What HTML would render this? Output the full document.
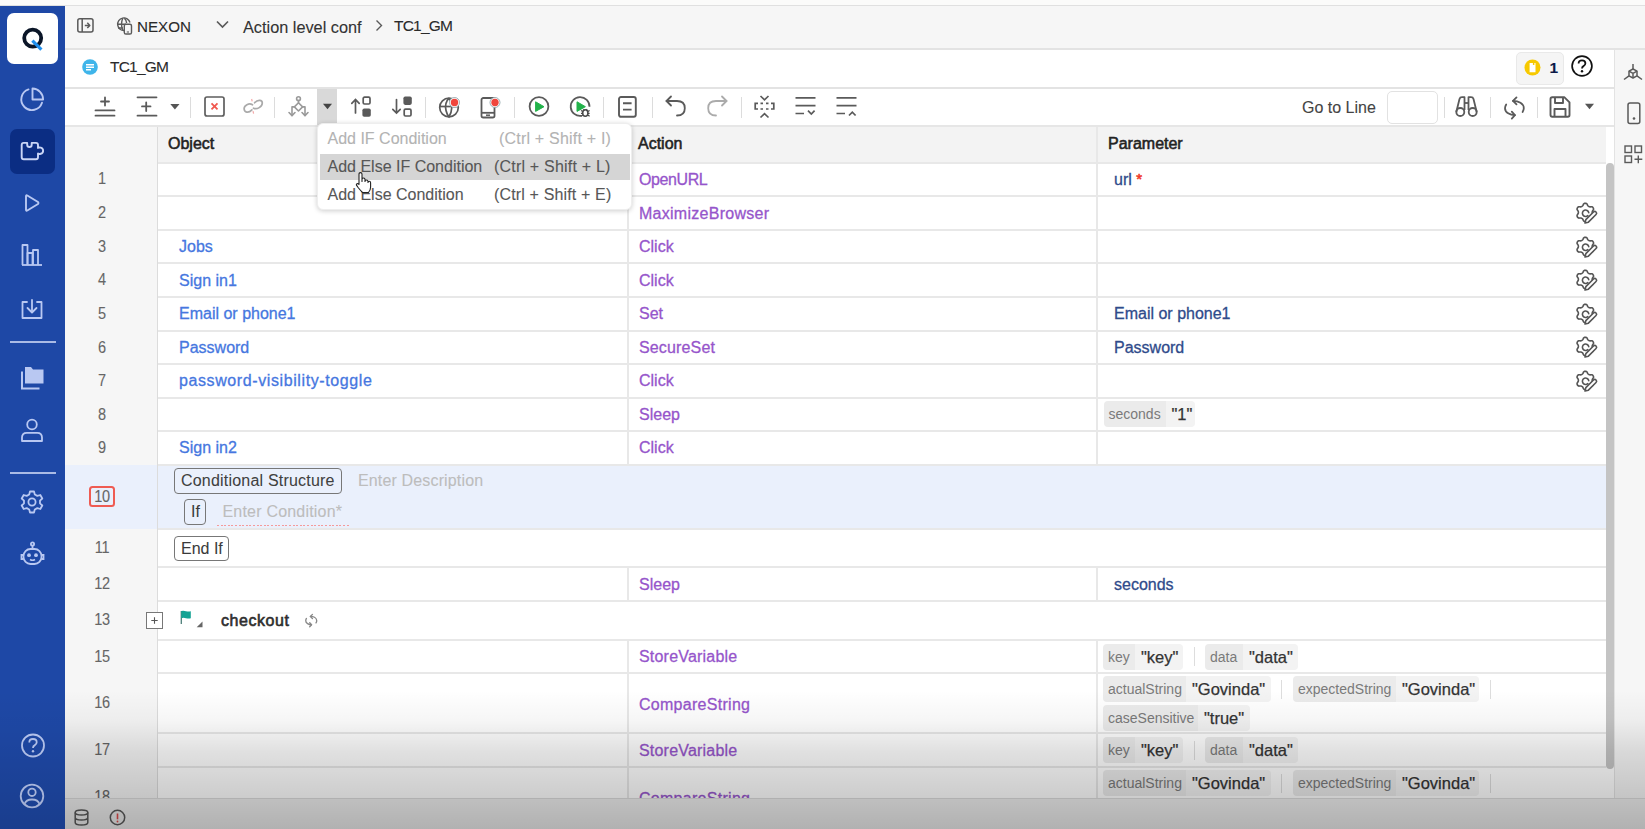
<!DOCTYPE html><html><head><meta charset="utf-8"><title>TC1_GM</title><style>
*{box-sizing:border-box;margin:0;padding:0}
html,body{width:1645px;height:829px;overflow:hidden;background:#f6f6f6;font-family:"Liberation Sans",sans-serif}
body{position:relative}
.a{position:absolute}
.t{position:absolute;white-space:nowrap;line-height:1;-webkit-text-stroke-width:0.1px}
svg{position:absolute;overflow:visible}
.hl{position:absolute;height:2px;background:#e8e8e8}
.vl{position:absolute;width:2px;background:#e8e8e8}
.hd{font-size:16px;font-weight:400;color:#222;-webkit-text-stroke-width:0.55px}
.ln{font-size:16.5px;color:#666;width:40px;text-align:center;left:82px;letter-spacing:-0.3px;transform:scaleX(0.88);-webkit-text-stroke-width:0.1px}
.ob{font-size:16px;color:#4677df;left:179px;-webkit-text-stroke:0.3px #4677df}
.ac{font-size:16px;color:#9655cb;left:639px;-webkit-text-stroke:0.3px #9655cb}
.pm{font-size:16px;color:#2f4b8b;left:1114px;-webkit-text-stroke:0.3px #2f4b8b}
.chip{position:absolute;height:26px;display:flex;border-radius:4px;overflow:hidden;white-space:nowrap}
.chip .k{background:#ebebeb;color:#7a7a7a;font-size:14px;line-height:26px;padding:0 0 0 5px}
.chip .v{background:#f3f3f3;color:#333;font-size:16.5px;line-height:26px;-webkit-text-stroke-width:0.25px}
.sep{position:absolute;width:1px;height:19px;background:#ddd}
.ts{position:absolute;width:1px;height:21px;background:#dcdcdc;top:97px}
.mi{font-size:16px;color:#575757}
</style></head><body>
<div class="a" style="left:0;top:0;width:1645px;height:6px;background:#fbfbfa;border-bottom:1px solid #e0e0e0"></div>
<div class="a" style="left:65px;top:6px;width:1580px;height:44px;background:#f6f6f6;border-bottom:2px solid #e3e3e3"></div>
<div class="a" style="left:65px;top:50px;width:1549px;height:39px;background:#fff;border-bottom:2px solid #e3e3e3"></div>
<div class="a" style="left:65px;top:89px;width:1549px;height:38px;background:#fff;border-bottom:2px solid #e6e6e6"></div>
<div class="a" style="left:1614px;top:50px;width:31px;height:748px;background:#f6f6f6;border-left:1px solid #e3e3e3"></div>
<div class="a" style="left:65px;top:127px;width:1549px;height:671px;background:#fff"></div>
<div class="a" style="left:65px;top:127px;width:92px;height:671px;background:#f6f6f6"></div>
<div class="a" style="left:157px;top:127px;width:1449px;height:36px;background:#f3f3f3"></div>
<div class="a" style="left:65px;top:465px;width:1541px;height:64px;background:#eaf0fc"></div>
<div class="hl" style="left:157px;top:162px;width:1449px"></div>
<div class="hl" style="left:157px;top:195.0px;width:1449px"></div>
<div class="hl" style="left:157px;top:229.0px;width:1449px"></div>
<div class="hl" style="left:157px;top:262.0px;width:1449px"></div>
<div class="hl" style="left:157px;top:296.0px;width:1449px"></div>
<div class="hl" style="left:157px;top:329.5px;width:1449px"></div>
<div class="hl" style="left:157px;top:363.0px;width:1449px"></div>
<div class="hl" style="left:157px;top:396.5px;width:1449px"></div>
<div class="hl" style="left:157px;top:430.0px;width:1449px"></div>
<div class="hl" style="left:157px;top:463.5px;width:1449px"></div>
<div class="hl" style="left:157px;top:528.0px;width:1449px"></div>
<div class="hl" style="left:157px;top:566.0px;width:1449px"></div>
<div class="hl" style="left:157px;top:599.5px;width:1449px"></div>
<div class="hl" style="left:157px;top:638.5px;width:1449px"></div>
<div class="hl" style="left:157px;top:672.0px;width:1449px"></div>
<div class="hl" style="left:157px;top:732.0px;width:1449px"></div>
<div class="hl" style="left:157px;top:765.5px;width:1449px"></div>
<div class="a" style="left:157px;top:127px;width:1px;height:671px;background:#dcdcdc"></div>
<div class="vl" style="left:627px;top:163.0px;height:33.0px"></div>
<div class="vl" style="left:1096px;top:163.0px;height:33.0px"></div>
<div class="vl" style="left:627px;top:196.0px;height:34.0px"></div>
<div class="vl" style="left:1096px;top:196.0px;height:34.0px"></div>
<div class="vl" style="left:627px;top:230.0px;height:33.0px"></div>
<div class="vl" style="left:1096px;top:230.0px;height:33.0px"></div>
<div class="vl" style="left:627px;top:263.0px;height:34.0px"></div>
<div class="vl" style="left:1096px;top:263.0px;height:34.0px"></div>
<div class="vl" style="left:627px;top:297.0px;height:33.5px"></div>
<div class="vl" style="left:1096px;top:297.0px;height:33.5px"></div>
<div class="vl" style="left:627px;top:330.5px;height:33.5px"></div>
<div class="vl" style="left:1096px;top:330.5px;height:33.5px"></div>
<div class="vl" style="left:627px;top:364.0px;height:33.5px"></div>
<div class="vl" style="left:1096px;top:364.0px;height:33.5px"></div>
<div class="vl" style="left:627px;top:397.5px;height:33.5px"></div>
<div class="vl" style="left:1096px;top:397.5px;height:33.5px"></div>
<div class="vl" style="left:627px;top:431.0px;height:33.5px"></div>
<div class="vl" style="left:1096px;top:431.0px;height:33.5px"></div>
<div class="vl" style="left:627px;top:567.0px;height:33.5px"></div>
<div class="vl" style="left:1096px;top:567.0px;height:33.5px"></div>
<div class="vl" style="left:627px;top:639.5px;height:33.5px"></div>
<div class="vl" style="left:1096px;top:639.5px;height:33.5px"></div>
<div class="vl" style="left:627px;top:673.0px;height:60.0px"></div>
<div class="vl" style="left:1096px;top:673.0px;height:60.0px"></div>
<div class="vl" style="left:627px;top:733.0px;height:33.5px"></div>
<div class="vl" style="left:1096px;top:733.0px;height:33.5px"></div>
<div class="vl" style="left:627px;top:766.5px;height:31.5px"></div>
<div class="vl" style="left:1096px;top:766.5px;height:31.5px"></div>
<div class="vl" style="left:627px;top:127px;height:36px"></div>
<div class="vl" style="left:1096px;top:127px;height:36px"></div>
<div class="t ln" style="top:170.0px">1</div>
<div class="t ln" style="top:203.5px">2</div>
<div class="t ln" style="top:237.9px">3</div>
<div class="t ln" style="top:271.4px">4</div>
<div class="t ln" style="top:305.1px">5</div>
<div class="t ln" style="top:338.6px">6</div>
<div class="t ln" style="top:372.1px">7</div>
<div class="t ln" style="top:405.6px">8</div>
<div class="t ln" style="top:439.1px">9</div>
<div class="a" style="left:89px;top:486px;width:26px;height:21px;border:2px solid #ef5b52;border-radius:3.5px"></div>
<div class="t ln" style="top:488.1px">10</div>
<div class="t ln" style="top:539.4px">11</div>
<div class="t ln" style="top:575.1px">12</div>
<div class="t ln" style="top:611.4px">13</div>
<div class="t ln" style="top:647.6px">15</div>
<div class="t ln" style="top:694.4px">16</div>
<div class="t ln" style="top:741.1px">17</div>
<div class="t ln" style="top:787.9px">18</div>
<div class="t hd" style="left:168px;top:136.4px">Object</div>
<div class="t hd" style="left:638px;top:136.4px">Action</div>
<div class="t hd" style="left:1108px;top:136.4px">Parameter</div>
<div class="t ob" style="top:239.2px;letter-spacing:0px">Jobs</div>
<div class="t ob" style="top:272.7px;letter-spacing:0px">Sign in1</div>
<div class="t ob" style="top:306.4px;letter-spacing:0px">Email or phone1</div>
<div class="t ob" style="top:339.9px;letter-spacing:0px">Password</div>
<div class="t ob" style="top:373.4px;letter-spacing:0.6px">password-visibility-toggle</div>
<div class="t ob" style="top:440.4px;letter-spacing:0px">Sign in2</div>
<div class="t ac" style="top:172.2px;letter-spacing:-0.4px">OpenURL</div>
<div class="t ac" style="top:205.7px;letter-spacing:0.27px">MaximizeBrowser</div>
<div class="t ac" style="top:239.2px;letter-spacing:0px">Click</div>
<div class="t ac" style="top:272.7px;letter-spacing:0px">Click</div>
<div class="t ac" style="top:306.4px;letter-spacing:0px">Set</div>
<div class="t ac" style="top:339.9px;letter-spacing:0.15px">SecureSet</div>
<div class="t ac" style="top:373.4px;letter-spacing:0px">Click</div>
<div class="t ac" style="top:406.9px;letter-spacing:0px">Sleep</div>
<div class="t ac" style="top:440.4px;letter-spacing:0px">Click</div>
<div class="t ac" style="top:576.5px;letter-spacing:0px">Sleep</div>
<div class="t ac" style="top:649.0px;letter-spacing:0.2px">StoreVariable</div>
<div class="t ac" style="top:696.7px;letter-spacing:0.28px">CompareString</div>
<div class="t ac" style="top:742.5px;letter-spacing:0.2px">StoreVariable</div>
<div class="t ac" style="top:790.7px;letter-spacing:0.28px">CompareString</div>
<div class="t pm" style="top:172.2px">url <span style="color:#f03c2a;-webkit-text-stroke:0.6px #f03c2a;font-size:15px;position:relative;top:-1px">*</span></div>
<div class="t pm" style="top:306.4px">Email or phone1</div>
<div class="t pm" style="top:339.9px">Password</div>
<div class="t pm" style="top:576.5px">seconds</div>
<div class="chip" style="left:1103.5px;top:401.2px"><span class="k" style="width:62px">seconds</span><span class="v" style="width:29px;padding-left:6px">"1"</span></div>
<div class="chip" style="left:1103px;top:643.5px"><span class="k" style="width:32px">key</span><span class="v" style="width:48px;padding-left:6px">"key"</span></div>
<div class="sep" style="left:1194px;top:647.0px"></div>
<div class="chip" style="left:1205px;top:643.5px"><span class="k" style="width:38px">data</span><span class="v" style="width:55px;padding-left:6px">"data"</span></div>
<div class="chip" style="left:1103px;top:737.0px"><span class="k" style="width:32px">key</span><span class="v" style="width:48px;padding-left:6px">"key"</span></div>
<div class="sep" style="left:1194px;top:740.5px"></div>
<div class="chip" style="left:1205px;top:737.0px"><span class="k" style="width:38px">data</span><span class="v" style="width:55px;padding-left:6px">"data"</span></div>
<div class="chip" style="left:1103px;top:676.0px"><span class="k" style="width:83px">actualString</span><span class="v" style="width:85px;padding-left:6px">"Govinda"</span></div>
<div class="sep" style="left:1281px;top:679.5px"></div>
<div class="chip" style="left:1293px;top:676.0px"><span class="k" style="width:103px">expectedString</span><span class="v" style="width:83px;padding-left:6px">"Govinda"</span></div>
<div class="sep" style="left:1490px;top:679.5px"></div>
<div class="chip" style="left:1103px;top:770.0px"><span class="k" style="width:83px">actualString</span><span class="v" style="width:85px;padding-left:6px">"Govinda"</span></div>
<div class="sep" style="left:1281px;top:773.5px"></div>
<div class="chip" style="left:1293px;top:770.0px"><span class="k" style="width:103px">expectedString</span><span class="v" style="width:83px;padding-left:6px">"Govinda"</span></div>
<div class="sep" style="left:1490px;top:773.5px"></div>
<div class="chip" style="left:1103px;top:705.0px"><span class="k" style="width:95px">caseSensitive</span><span class="v" style="width:52px;padding-left:6px">"true"</span></div>
<svg style="left:1576px;top:203.0px" width="22" height="22" viewBox="0 0 22 22"><g fill="none" stroke="#555" stroke-width="1.6" stroke-linejoin="round" stroke-linecap="round"><path d="M16.20 9.40 L16.23 9.85 L16.33 10.33 L16.51 10.83 L17.03 11.47 L17.49 12.18 L17.53 12.81 L17.42 13.40 L17.18 13.95 L16.83 14.43 L16.37 14.82 L15.80 15.10 L14.96 15.06 L14.15 14.93 L13.62 15.03 L13.16 15.18 L12.75 15.38 L12.37 15.63 L12.01 15.95 L11.66 16.36 L11.37 17.13 L10.99 17.88 L10.46 18.23 L9.89 18.43 L9.30 18.50 L8.71 18.43 L8.14 18.23 L7.61 17.88 L7.23 17.13 L6.94 16.36 L6.59 15.95 L6.23 15.63 L5.85 15.38 L5.44 15.18 L4.98 15.03 L4.45 14.93 L3.64 15.06 L2.80 15.10 L2.23 14.82 L1.77 14.43 L1.42 13.95 L1.18 13.40 L1.07 12.81 L1.11 12.18 L1.57 11.47 L2.09 10.83 L2.27 10.33 L2.37 9.85 L2.40 9.40 L2.37 8.95 L2.27 8.47 L2.09 7.97 L1.57 7.33 L1.11 6.62 L1.07 5.99 L1.18 5.40 L1.42 4.85 L1.77 4.37 L2.23 3.98 L2.80 3.70 L3.64 3.74 L4.45 3.87 L4.98 3.77 L5.44 3.62 L5.85 3.42 L6.23 3.17 L6.59 2.85 L6.94 2.44 L7.23 1.67 L7.61 0.92 L8.14 0.57 L8.71 0.37 L9.30 0.30 L9.89 0.37 L10.46 0.57 L10.99 0.92 L11.37 1.67 L11.66 2.44 L12.01 2.85 L12.37 3.17 L12.75 3.42 L13.16 3.62 L13.62 3.77 L14.15 3.87 L14.96 3.74 L15.80 3.70 L16.37 3.98 L16.83 4.37 L17.18 4.85 L17.42 5.40 L17.53 5.99 L17.49 6.62 L17.03 7.33 L16.51 7.97 L16.33 8.47 L16.23 8.95Z"/><path d="M11.8 12.6A3.2 3.2 0 1 1 12.75 9.6"/><path d="M0 0L3 -1.8H13.8Q15.6 -1.8 15.6 0Q15.6 1.8 13.8 1.8H3Z" fill="#fff" transform="translate(9 20) rotate(-45)"/></g></svg>
<svg style="left:1576px;top:236.5px" width="22" height="22" viewBox="0 0 22 22"><g fill="none" stroke="#555" stroke-width="1.6" stroke-linejoin="round" stroke-linecap="round"><path d="M16.20 9.40 L16.23 9.85 L16.33 10.33 L16.51 10.83 L17.03 11.47 L17.49 12.18 L17.53 12.81 L17.42 13.40 L17.18 13.95 L16.83 14.43 L16.37 14.82 L15.80 15.10 L14.96 15.06 L14.15 14.93 L13.62 15.03 L13.16 15.18 L12.75 15.38 L12.37 15.63 L12.01 15.95 L11.66 16.36 L11.37 17.13 L10.99 17.88 L10.46 18.23 L9.89 18.43 L9.30 18.50 L8.71 18.43 L8.14 18.23 L7.61 17.88 L7.23 17.13 L6.94 16.36 L6.59 15.95 L6.23 15.63 L5.85 15.38 L5.44 15.18 L4.98 15.03 L4.45 14.93 L3.64 15.06 L2.80 15.10 L2.23 14.82 L1.77 14.43 L1.42 13.95 L1.18 13.40 L1.07 12.81 L1.11 12.18 L1.57 11.47 L2.09 10.83 L2.27 10.33 L2.37 9.85 L2.40 9.40 L2.37 8.95 L2.27 8.47 L2.09 7.97 L1.57 7.33 L1.11 6.62 L1.07 5.99 L1.18 5.40 L1.42 4.85 L1.77 4.37 L2.23 3.98 L2.80 3.70 L3.64 3.74 L4.45 3.87 L4.98 3.77 L5.44 3.62 L5.85 3.42 L6.23 3.17 L6.59 2.85 L6.94 2.44 L7.23 1.67 L7.61 0.92 L8.14 0.57 L8.71 0.37 L9.30 0.30 L9.89 0.37 L10.46 0.57 L10.99 0.92 L11.37 1.67 L11.66 2.44 L12.01 2.85 L12.37 3.17 L12.75 3.42 L13.16 3.62 L13.62 3.77 L14.15 3.87 L14.96 3.74 L15.80 3.70 L16.37 3.98 L16.83 4.37 L17.18 4.85 L17.42 5.40 L17.53 5.99 L17.49 6.62 L17.03 7.33 L16.51 7.97 L16.33 8.47 L16.23 8.95Z"/><path d="M11.8 12.6A3.2 3.2 0 1 1 12.75 9.6"/><path d="M0 0L3 -1.8H13.8Q15.6 -1.8 15.6 0Q15.6 1.8 13.8 1.8H3Z" fill="#fff" transform="translate(9 20) rotate(-45)"/></g></svg>
<svg style="left:1576px;top:270.0px" width="22" height="22" viewBox="0 0 22 22"><g fill="none" stroke="#555" stroke-width="1.6" stroke-linejoin="round" stroke-linecap="round"><path d="M16.20 9.40 L16.23 9.85 L16.33 10.33 L16.51 10.83 L17.03 11.47 L17.49 12.18 L17.53 12.81 L17.42 13.40 L17.18 13.95 L16.83 14.43 L16.37 14.82 L15.80 15.10 L14.96 15.06 L14.15 14.93 L13.62 15.03 L13.16 15.18 L12.75 15.38 L12.37 15.63 L12.01 15.95 L11.66 16.36 L11.37 17.13 L10.99 17.88 L10.46 18.23 L9.89 18.43 L9.30 18.50 L8.71 18.43 L8.14 18.23 L7.61 17.88 L7.23 17.13 L6.94 16.36 L6.59 15.95 L6.23 15.63 L5.85 15.38 L5.44 15.18 L4.98 15.03 L4.45 14.93 L3.64 15.06 L2.80 15.10 L2.23 14.82 L1.77 14.43 L1.42 13.95 L1.18 13.40 L1.07 12.81 L1.11 12.18 L1.57 11.47 L2.09 10.83 L2.27 10.33 L2.37 9.85 L2.40 9.40 L2.37 8.95 L2.27 8.47 L2.09 7.97 L1.57 7.33 L1.11 6.62 L1.07 5.99 L1.18 5.40 L1.42 4.85 L1.77 4.37 L2.23 3.98 L2.80 3.70 L3.64 3.74 L4.45 3.87 L4.98 3.77 L5.44 3.62 L5.85 3.42 L6.23 3.17 L6.59 2.85 L6.94 2.44 L7.23 1.67 L7.61 0.92 L8.14 0.57 L8.71 0.37 L9.30 0.30 L9.89 0.37 L10.46 0.57 L10.99 0.92 L11.37 1.67 L11.66 2.44 L12.01 2.85 L12.37 3.17 L12.75 3.42 L13.16 3.62 L13.62 3.77 L14.15 3.87 L14.96 3.74 L15.80 3.70 L16.37 3.98 L16.83 4.37 L17.18 4.85 L17.42 5.40 L17.53 5.99 L17.49 6.62 L17.03 7.33 L16.51 7.97 L16.33 8.47 L16.23 8.95Z"/><path d="M11.8 12.6A3.2 3.2 0 1 1 12.75 9.6"/><path d="M0 0L3 -1.8H13.8Q15.6 -1.8 15.6 0Q15.6 1.8 13.8 1.8H3Z" fill="#fff" transform="translate(9 20) rotate(-45)"/></g></svg>
<svg style="left:1576px;top:303.8px" width="22" height="22" viewBox="0 0 22 22"><g fill="none" stroke="#555" stroke-width="1.6" stroke-linejoin="round" stroke-linecap="round"><path d="M16.20 9.40 L16.23 9.85 L16.33 10.33 L16.51 10.83 L17.03 11.47 L17.49 12.18 L17.53 12.81 L17.42 13.40 L17.18 13.95 L16.83 14.43 L16.37 14.82 L15.80 15.10 L14.96 15.06 L14.15 14.93 L13.62 15.03 L13.16 15.18 L12.75 15.38 L12.37 15.63 L12.01 15.95 L11.66 16.36 L11.37 17.13 L10.99 17.88 L10.46 18.23 L9.89 18.43 L9.30 18.50 L8.71 18.43 L8.14 18.23 L7.61 17.88 L7.23 17.13 L6.94 16.36 L6.59 15.95 L6.23 15.63 L5.85 15.38 L5.44 15.18 L4.98 15.03 L4.45 14.93 L3.64 15.06 L2.80 15.10 L2.23 14.82 L1.77 14.43 L1.42 13.95 L1.18 13.40 L1.07 12.81 L1.11 12.18 L1.57 11.47 L2.09 10.83 L2.27 10.33 L2.37 9.85 L2.40 9.40 L2.37 8.95 L2.27 8.47 L2.09 7.97 L1.57 7.33 L1.11 6.62 L1.07 5.99 L1.18 5.40 L1.42 4.85 L1.77 4.37 L2.23 3.98 L2.80 3.70 L3.64 3.74 L4.45 3.87 L4.98 3.77 L5.44 3.62 L5.85 3.42 L6.23 3.17 L6.59 2.85 L6.94 2.44 L7.23 1.67 L7.61 0.92 L8.14 0.57 L8.71 0.37 L9.30 0.30 L9.89 0.37 L10.46 0.57 L10.99 0.92 L11.37 1.67 L11.66 2.44 L12.01 2.85 L12.37 3.17 L12.75 3.42 L13.16 3.62 L13.62 3.77 L14.15 3.87 L14.96 3.74 L15.80 3.70 L16.37 3.98 L16.83 4.37 L17.18 4.85 L17.42 5.40 L17.53 5.99 L17.49 6.62 L17.03 7.33 L16.51 7.97 L16.33 8.47 L16.23 8.95Z"/><path d="M11.8 12.6A3.2 3.2 0 1 1 12.75 9.6"/><path d="M0 0L3 -1.8H13.8Q15.6 -1.8 15.6 0Q15.6 1.8 13.8 1.8H3Z" fill="#fff" transform="translate(9 20) rotate(-45)"/></g></svg>
<svg style="left:1576px;top:337.2px" width="22" height="22" viewBox="0 0 22 22"><g fill="none" stroke="#555" stroke-width="1.6" stroke-linejoin="round" stroke-linecap="round"><path d="M16.20 9.40 L16.23 9.85 L16.33 10.33 L16.51 10.83 L17.03 11.47 L17.49 12.18 L17.53 12.81 L17.42 13.40 L17.18 13.95 L16.83 14.43 L16.37 14.82 L15.80 15.10 L14.96 15.06 L14.15 14.93 L13.62 15.03 L13.16 15.18 L12.75 15.38 L12.37 15.63 L12.01 15.95 L11.66 16.36 L11.37 17.13 L10.99 17.88 L10.46 18.23 L9.89 18.43 L9.30 18.50 L8.71 18.43 L8.14 18.23 L7.61 17.88 L7.23 17.13 L6.94 16.36 L6.59 15.95 L6.23 15.63 L5.85 15.38 L5.44 15.18 L4.98 15.03 L4.45 14.93 L3.64 15.06 L2.80 15.10 L2.23 14.82 L1.77 14.43 L1.42 13.95 L1.18 13.40 L1.07 12.81 L1.11 12.18 L1.57 11.47 L2.09 10.83 L2.27 10.33 L2.37 9.85 L2.40 9.40 L2.37 8.95 L2.27 8.47 L2.09 7.97 L1.57 7.33 L1.11 6.62 L1.07 5.99 L1.18 5.40 L1.42 4.85 L1.77 4.37 L2.23 3.98 L2.80 3.70 L3.64 3.74 L4.45 3.87 L4.98 3.77 L5.44 3.62 L5.85 3.42 L6.23 3.17 L6.59 2.85 L6.94 2.44 L7.23 1.67 L7.61 0.92 L8.14 0.57 L8.71 0.37 L9.30 0.30 L9.89 0.37 L10.46 0.57 L10.99 0.92 L11.37 1.67 L11.66 2.44 L12.01 2.85 L12.37 3.17 L12.75 3.42 L13.16 3.62 L13.62 3.77 L14.15 3.87 L14.96 3.74 L15.80 3.70 L16.37 3.98 L16.83 4.37 L17.18 4.85 L17.42 5.40 L17.53 5.99 L17.49 6.62 L17.03 7.33 L16.51 7.97 L16.33 8.47 L16.23 8.95Z"/><path d="M11.8 12.6A3.2 3.2 0 1 1 12.75 9.6"/><path d="M0 0L3 -1.8H13.8Q15.6 -1.8 15.6 0Q15.6 1.8 13.8 1.8H3Z" fill="#fff" transform="translate(9 20) rotate(-45)"/></g></svg>
<svg style="left:1576px;top:370.8px" width="22" height="22" viewBox="0 0 22 22"><g fill="none" stroke="#555" stroke-width="1.6" stroke-linejoin="round" stroke-linecap="round"><path d="M16.20 9.40 L16.23 9.85 L16.33 10.33 L16.51 10.83 L17.03 11.47 L17.49 12.18 L17.53 12.81 L17.42 13.40 L17.18 13.95 L16.83 14.43 L16.37 14.82 L15.80 15.10 L14.96 15.06 L14.15 14.93 L13.62 15.03 L13.16 15.18 L12.75 15.38 L12.37 15.63 L12.01 15.95 L11.66 16.36 L11.37 17.13 L10.99 17.88 L10.46 18.23 L9.89 18.43 L9.30 18.50 L8.71 18.43 L8.14 18.23 L7.61 17.88 L7.23 17.13 L6.94 16.36 L6.59 15.95 L6.23 15.63 L5.85 15.38 L5.44 15.18 L4.98 15.03 L4.45 14.93 L3.64 15.06 L2.80 15.10 L2.23 14.82 L1.77 14.43 L1.42 13.95 L1.18 13.40 L1.07 12.81 L1.11 12.18 L1.57 11.47 L2.09 10.83 L2.27 10.33 L2.37 9.85 L2.40 9.40 L2.37 8.95 L2.27 8.47 L2.09 7.97 L1.57 7.33 L1.11 6.62 L1.07 5.99 L1.18 5.40 L1.42 4.85 L1.77 4.37 L2.23 3.98 L2.80 3.70 L3.64 3.74 L4.45 3.87 L4.98 3.77 L5.44 3.62 L5.85 3.42 L6.23 3.17 L6.59 2.85 L6.94 2.44 L7.23 1.67 L7.61 0.92 L8.14 0.57 L8.71 0.37 L9.30 0.30 L9.89 0.37 L10.46 0.57 L10.99 0.92 L11.37 1.67 L11.66 2.44 L12.01 2.85 L12.37 3.17 L12.75 3.42 L13.16 3.62 L13.62 3.77 L14.15 3.87 L14.96 3.74 L15.80 3.70 L16.37 3.98 L16.83 4.37 L17.18 4.85 L17.42 5.40 L17.53 5.99 L17.49 6.62 L17.03 7.33 L16.51 7.97 L16.33 8.47 L16.23 8.95Z"/><path d="M11.8 12.6A3.2 3.2 0 1 1 12.75 9.6"/><path d="M0 0L3 -1.8H13.8Q15.6 -1.8 15.6 0Q15.6 1.8 13.8 1.8H3Z" fill="#fff" transform="translate(9 20) rotate(-45)"/></g></svg>
<div class="t" style="left:137px;top:18.5px;font-size:15.2px;color:#2a2a2a">NEXON</div>
<div class="t" style="left:243px;top:18.5px;font-size:16.3px;color:#333">Action level conf</div>
<div class="t" style="left:394px;top:18px;font-size:15.5px;color:#2a2a2a;letter-spacing:-0.8px">TC1_GM</div>
<div class="t" style="left:110px;top:59px;font-size:15.5px;color:#2a2a2a;letter-spacing:-0.8px">TC1_GM</div>
<div class="t" style="left:1302px;top:100px;font-size:16px;color:#444">Go to Line</div>
<div class="a" style="left:1387px;top:91px;width:51px;height:33px;border:1px solid #e2e2e2;border-radius:5px;background:#fff"></div>
<div class="a" style="left:1606px;top:163px;width:8px;height:606px;background:#c4c4c4;border-radius:4px"></div>
<div class="a" style="left:65px;top:798px;width:1580px;height:31px;background:#efefef;border-top:1px solid #dcdcdc"></div>
<div class="a" style="left:174px;top:468px;width:168px;height:25.5px;border:1.5px solid #777;border-radius:4px;background:transparent"></div>
<div class="t" style="left:181px;top:473px;font-size:16px;color:#404040;letter-spacing:0.2px;-webkit-text-stroke-width:0.05px">Conditional Structure</div>
<div class="t" style="left:358px;top:473px;font-size:16px;color:#bdbdbd;letter-spacing:0.15px">Enter Description</div>
<div class="a" style="left:184px;top:499px;width:22px;height:25.5px;border:1.5px solid #777;border-radius:4px;background:transparent"></div>
<div class="t" style="left:191px;top:504px;font-size:16px;color:#3a3a3a;-webkit-text-stroke-width:0.05px">If</div>
<div class="t" style="left:222.5px;top:504px;font-size:16px;color:#bdbdbd;letter-spacing:0.2px">Enter Condition*</div>
<div class="a" style="left:217px;top:524.5px;width:132px;height:1.6px;background:repeating-linear-gradient(to right,#f59a9a 0 2px,transparent 2px 3.6px)"></div>
<div class="a" style="left:174px;top:535.5px;width:55px;height:25.5px;border:1.5px solid #777;border-radius:4px;background:#fff"></div>
<div class="t" style="left:181px;top:540.5px;font-size:16px;color:#3a3a3a;-webkit-text-stroke-width:0.05px">End If</div>
<div class="a" style="left:146px;top:611.5px;width:17px;height:17px;border:1px solid #777;background:#fff"></div>
<svg style="left:146px;top:611.5px" width="17" height="17"><path d="M5.3 8.5h6.4M8.5 5.3v6.4" stroke="#555" stroke-width="1.1"/></svg>
<svg style="left:179px;top:609px" width="26" height="22"><path d="M2.3 2v13" stroke="#4d7f7a" stroke-width="1.3"/><path d="M2.3 2Q4.5 1.3 7 2.2Q9.5 3 11.8 2.2V9.2Q9.5 10 7 9.2Q4.5 8.4 2.3 9.2Z" fill="#14a394"/><path d="M23.5 12.5v5.8h-5.8z" fill="#666"/></svg>
<div class="t" style="left:221px;top:612.5px;font-size:16px;font-weight:400;color:#2e2e2e;-webkit-text-stroke-width:0.6px;letter-spacing:0.55px">checkout</div>
<svg style="left:304px;top:612.5px" width="14" height="14" viewBox="0 0 24 24"><g fill="none" stroke="#888" stroke-width="2.3" stroke-linecap="round" stroke-linejoin="round"><path d="M11 5.9C16.5 5.9 21.8 8.5 21.8 13.2C21.8 14.5 21.2 16 20.6 17"/><path d="M14.5 2.4L11 5.9L14.5 9.4"/><path d="M4.2 9.4C3.5 10.5 3 12 3 13.2C3 17.5 8 20.2 12.9 20.2"/><path d="M9.8 16.7L12.9 20.2L9.8 23.6"/></g></svg>
<div class="a" style="left:0;top:6px;width:65px;height:823px;background:#1e48a6"></div>
<div class="a" style="left:7px;top:13px;width:51px;height:51px;background:#fff;border-radius:7px"></div>
<svg style="left:7px;top:13px" width="51" height="51" viewBox="0 0 51 51"><circle cx="25.7" cy="25.1" r="8.5" fill="none" stroke="#0b1628" stroke-width="3.8"/><path d="M25.4 27.6L34.4 36.6" stroke="#1f8fee" stroke-width="3.2"/></svg>
<div class="a" style="left:9.5px;top:129px;width:45.5px;height:44.5px;background:#0b2d83;border-radius:7px"></div>
<svg style="left:20px;top:87px" width="24" height="24" viewBox="0 0 24 24"><g fill="none" stroke="#b9c8f2" stroke-width="1.9" stroke-linejoin="round" stroke-linecap="round"><path d="M8.5 2.4A10.6 10.6 0 1 0 22 15.7"/><path d="M12.5 1.5V12.5H23.1A11 11 0 0 0 12.5 1.5Z"/></g></svg>
<svg style="left:20px;top:140px" width="26" height="22" viewBox="0 0 26 22"><path d="M3.7 2.9H7.2V4.8A2.25 2.25 0 0 0 11.7 4.8V2.9H16Q18 2.9 18 4.9V8C18.6 7.2 23.1 7 23.1 10.7C23.1 14.4 18.6 14.2 18 13.4V17.3Q18 19.3 16 19.3H3.7Q1.7 19.3 1.7 17.3V4.9Q1.7 2.9 3.7 2.9Z" fill="none" stroke="#c9d5f6" stroke-width="1.9" stroke-linejoin="round"/></svg>
<svg style="left:23px;top:193px" width="18" height="20" viewBox="0 0 18 20"><path d="M3 3.2Q3 1.8 4.3 2.5L15 9Q16 10 15 11L4.3 17.5Q3 18.2 3 16.8Z" fill="none" stroke="#b9c8f2" stroke-width="1.9" stroke-linejoin="round"/></svg>
<svg style="left:20px;top:243px" width="24" height="24" viewBox="0 0 24 24"><g fill="none" stroke="#b9c8f2" stroke-width="1.8" stroke-linejoin="round"><path d="M2 22H22"/><path d="M2.5 22V2H7.5V22"/><path d="M7.5 22V10H12.5V22"/><path d="M13 22V7H18V22"/></g></svg>
<svg style="left:20px;top:297px" width="24" height="24" viewBox="0 0 24 24"><g fill="none" stroke="#b9c8f2" stroke-width="1.8" stroke-linejoin="round" stroke-linecap="round"><path d="M7 5H2.5V21H21.5V5H17"/><path d="M12 3V15"/><path d="M7.5 11L12 15.5L16.5 11"/></g></svg>
<div class="a" style="left:9.5px;top:341px;width:46px;height:2px;background:#aabbe6"></div>
<div class="a" style="left:9.5px;top:472px;width:46px;height:2px;background:#aabbe6"></div>
<svg style="left:20px;top:365px" width="25" height="26" viewBox="0 0 25 26"><path d="M5 2H11L13 4.5H23.5V18.5H5Z" fill="#b9c8f2"/><path d="M2 6.5V23.5H19.5" fill="none" stroke="#b9c8f2" stroke-width="2"/></svg>
<svg style="left:20px;top:418px" width="24" height="24" viewBox="0 0 24 24"><g fill="none" stroke="#b9c8f2" stroke-width="1.8"><circle cx="12" cy="6.5" r="4.8"/><path d="M2 23V19.5Q2 14.8 6.8 14.8H17.2Q22 14.8 22 19.5V23Z" stroke-linejoin="round"/></g></svg>
<svg style="left:20px;top:490px" width="24" height="24" viewBox="0 0 24 24"><g fill="none" stroke="#b9c8f2" stroke-width="1.8" stroke-linejoin="round"><path d="M10 1.5H14L14.8 4.5L17.3 5.9L20.3 5L22.3 8.5L20 10.6V13.4L22.3 15.5L20.3 19L17.3 18.1L14.8 19.5L14 22.5H10L9.2 19.5L6.7 18.1L3.7 19L1.7 15.5L4 13.4V10.6L1.7 8.5L3.7 5L6.7 5.9L9.2 4.5Z"/><circle cx="12" cy="12" r="3.6"/></g></svg>
<svg style="left:20px;top:541px" width="25" height="26" viewBox="0 0 25 26"><g fill="none" stroke="#b9c8f2" stroke-width="1.8"><rect x="3.5" y="8" width="18" height="15" rx="7"/><path d="M12.5 8V4.5"/><circle cx="12.5" cy="3" r="1.6"/><path d="M3.5 14H1.5V18H3.5M21.5 14H23.5V18H21.5"/></g><circle cx="9" cy="14.2" r="1.9" fill="#b9c8f2"/><circle cx="16" cy="14.2" r="1.9" fill="#b9c8f2"/><path d="M10 18.5Q12.5 20 15 18.5" stroke="#b9c8f2" stroke-width="1.5" fill="none"/></svg>
<svg style="left:20px;top:733px" width="26" height="26" viewBox="0 0 26 26"><g fill="none" stroke="#b9c8f2" stroke-width="1.8"><circle cx="13" cy="12.5" r="11"/><path d="M9.3 9.5Q9.3 6 13 6Q16.7 6 16.7 9.3Q16.7 11.3 14.6 12.4Q13 13.2 13 15"/></g><circle cx="13" cy="18.3" r="1.2" fill="#b9c8f2"/></svg>
<svg style="left:19px;top:783px" width="26" height="26" viewBox="0 0 26 26"><g fill="none" stroke="#b9c8f2" stroke-width="1.8"><circle cx="13" cy="13" r="11.3"/><circle cx="13" cy="9.3" r="3.7"/><path d="M5.5 21Q7 16.5 13 16.5Q19 16.5 20.5 21"/></g></svg>
<svg style="left:77px;top:18px" width="17" height="15" viewBox="0 0 17 15"><g fill="none" stroke="#5a5a5a" stroke-width="1.5" stroke-linejoin="round"><rect x="0.8" y="0.8" width="15.2" height="13.2" rx="2"/><path d="M5.2 .8V14"/><path d="M7.8 7.4H12.8M10.3 4.8L12.8 7.4L10.3 10"/></g></svg>
<svg style="left:116px;top:17px" width="17" height="18" viewBox="0 0 17 18"><g fill="none" stroke="#5a5a5a" stroke-width="1.4"><path d="M8.5 13.5A6.3 6.3 0 1 1 14 5.5"/><path d="M1.3 7.2H10M2 11H7"/><path d="M6.8 1.2Q4.2 7 6.8 13.2M8.4 1.2Q10.5 3.2 10.6 6"/><rect x="8.3" y="7.2" width="7.2" height="9.8" rx="1.6" fill="#f6f6f6"/></g><path d="M10.8 15h2.2" stroke="#5a5a5a" stroke-width="1.1"/></svg>
<svg style="left:216px;top:20px" width="13" height="9" viewBox="0 0 13 9"><path d="M1 1.5L6.5 7L12 1.5" fill="none" stroke="#5a5a5a" stroke-width="1.7"/></svg>
<svg style="left:375px;top:19px" width="8" height="13" viewBox="0 0 8 13"><path d="M1.5 1.5L6.5 6.5L1.5 11.5" fill="none" stroke="#5a5a5a" stroke-width="1.4"/></svg>
<svg style="left:82px;top:59px" width="16" height="16" viewBox="0 0 16 16"><circle cx="8" cy="8" r="7.8" fill="#3fb5ea"/><path d="M4 5.8H12M4 8.3H12M4 10.8H9" stroke="#fff" stroke-width="1.4"/></svg>
<div class="a" style="left:1516px;top:51.5px;width:47.5px;height:33px;background:#f5f5f5;border:1px solid #e9e9e9;border-radius:5px"></div>
<svg style="left:1524px;top:59px" width="17" height="17" viewBox="0 0 17 17"><circle cx="8.5" cy="8.5" r="8" fill="#f7c900"/><path d="M5.6 4V13.3H11.5V4H10.4V6H8.9V4Z" fill="#fff"/></svg>
<div class="t" style="left:1549.5px;top:60px;font-size:15.5px;font-weight:700;color:#0b1a48">1</div>
<svg style="left:1571px;top:55px" width="22" height="22" viewBox="0 0 22 22"><circle cx="11" cy="11" r="9.9" fill="none" stroke="#111" stroke-width="1.7"/><path d="M7.6 8.6Q7.6 5.3 11 5.3Q14.4 5.3 14.4 8.3Q14.4 10.1 12.5 11.1Q11 11.9 11 13.5" fill="none" stroke="#111" stroke-width="1.8"/><circle cx="11" cy="16.2" r="1.2" fill="#111"/></svg>
<svg style="left:1623px;top:63px" width="20" height="18" viewBox="0 0 20 18"><g fill="none" stroke="#5a5a5a" stroke-width="1.5" stroke-linejoin="round"><path d="M10 1V6"/><path d="M10 6L14 8.2V12.8L10 15L6 12.8V8.2Z"/><path d="M6 8.2L10 10.4L14 8.2M10 10.4V15"/><path d="M6 12.8L1 16.5M14 12.8L19 16.5"/></g></svg>
<svg style="left:1627px;top:102px" width="14" height="23" viewBox="0 0 14 23"><rect x="1" y="1" width="11.8" height="20.5" rx="2" fill="none" stroke="#5a5a5a" stroke-width="1.5"/><circle cx="7" cy="16.5" r="1.3" fill="#5a5a5a"/></svg>
<svg style="left:1624px;top:145px" width="19" height="19" viewBox="0 0 19 19"><g fill="none" stroke="#5a5a5a" stroke-width="1.4"><rect x="1" y="1" width="6.5" height="6.5"/><rect x="11" y="1" width="6.5" height="6.5"/><rect x="1" y="11" width="6.5" height="6.5"/><path d="M14.3 10.5V18.3M10.5 14.3H18.3"/></g></svg>
<svg style="left:94px;top:96px" width="22" height="22" viewBox="0 0 22 22"><g fill="none" stroke="#5a5a5a" stroke-width="1.8" stroke-linecap="round"><path d="M11 1.5V9.5M7 5.5H15"/><path d="M1.5 14.4H20.5M1.5 19.7H20.5"/></g></svg>
<svg style="left:136px;top:96px" width="22" height="22" viewBox="0 0 22 22"><g fill="none" stroke="#5a5a5a" stroke-width="1.8" stroke-linecap="round"><path d="M1.5 1.3H20.5M1.5 19.7H20.5"/><path d="M10.2 6.5V15M6 10.4H14.5"/></g></svg>
<svg style="left:169px;top:103px" width="12" height="8" viewBox="0 0 12 8"><path d="M1.3 1H10.5L5.9 6.5Z" fill="#555"/></svg>
<div class="ts" style="left:190px"></div>
<svg style="left:204px;top:96px" width="21" height="21" viewBox="0 0 21 21"><rect x="1" y="1" width="19" height="19" rx="2" fill="none" stroke="#5e5e5e" stroke-width="1.7"/><path d="M7.5 7.3L13.5 13.3M13.5 7.3L7.5 13.3" stroke="#f0584f" stroke-width="1.8"/></svg>
<svg style="left:242px;top:97px" width="22" height="20" viewBox="0 0 22 20"><g fill="none" stroke="#aaaaaa" stroke-width="1.7" stroke-linecap="round"><path d="M10.5 7.8C7 5.5 2 8.5 2.1 11.8C2.2 15.5 6.5 16.5 9.9 12.9"/><path d="M12.6 5.8C16 2 20.3 3 20.3 6C20.3 9.8 15 12.8 11.5 11.2"/></g><path d="M9.6 2L10.2 4.4M11 14.2L11.6 16.6" stroke="#f4a8a8" stroke-width="1.2"/></svg>
<div class="ts" style="left:274px"></div>
<svg style="left:287px;top:96px" width="24" height="22" viewBox="0 0 24 22"><g fill="none" stroke="#9a9a9a" stroke-width="1.6" stroke-linejoin="round" stroke-linecap="round"><circle cx="11.5" cy="2.7" r="1.9"/><path d="M11.5 4.6V6.8"/><path d="M11.5 6.8L15.6 10.9L11.5 15L7.4 10.9Z"/><path d="M7.4 10.9H5V19.5M15.6 10.9H18V19.5"/><path d="M2 16.5L5 19.6L8 16.5M15 16.5L18 19.6L21 16.5"/></g></svg>
<div class="a" style="left:317px;top:89px;width:20px;height:36px;background:#d9d9d9"></div>
<svg style="left:322px;top:103px" width="11" height="7" viewBox="0 0 11 7"><path d="M1 .8H10L5.5 6.3Z" fill="#444"/></svg>
<svg style="left:350px;top:96px" width="22" height="22" viewBox="0 0 22 22"><g fill="none" stroke="#5a5a5a" stroke-width="1.7" stroke-linecap="round"><path d="M5.5 3.5V17M1.8 7.3L5.5 3.5L9.2 7.3"/><rect x="13.2" y="1.2" width="6.8" height="6.8" rx="1.3"/></g><rect x="12.4" y="12.4" width="8.4" height="8.4" rx="1.8" fill="#5a5a5a"/></svg>
<svg style="left:391px;top:96px" width="22" height="22" viewBox="0 0 22 22"><g fill="none" stroke="#5a5a5a" stroke-width="1.7" stroke-linecap="round"><path d="M5.5 3.5V17M1.8 13.3L5.5 17L9.2 13.3"/><rect x="13.2" y="13.2" width="6.8" height="6.8" rx="1.3"/></g><rect x="12.4" y="0.5" width="8.4" height="8.4" rx="1.8" fill="#5a5a5a"/></svg>
<div class="ts" style="left:425px"></div>
<svg style="left:438px;top:96px" width="24" height="24" viewBox="0 0 24 24"><g fill="none" stroke="#5a5a5a" stroke-width="1.7"><circle cx="11" cy="11.5" r="9.3"/><path d="M1.8 10.5H20.3"/><path d="M11 2.2Q6.3 7 8 14.5Q9 18.5 11 20.8Q13.5 17 13.8 11.5Q13.8 6 11 2.2"/></g><circle cx="16.5" cy="6.5" r="5.3" fill="#fff"/><circle cx="16.5" cy="6.5" r="5" fill="none" stroke="#4d6d78" stroke-width=".9" opacity=".6"/><circle cx="16.5" cy="6.5" r="3.7" fill="#f0453c"/></svg>
<svg style="left:480px;top:96px" width="22" height="23" viewBox="0 0 22 23"><g fill="none" stroke="#5a5a5a" stroke-width="1.8" stroke-linejoin="round"><rect x="1.5" y="2" width="13" height="19.5" rx="1.8"/><path d="M1.5 16.8H14.5"/></g><path d="M6 19.2H10" stroke="#5a5a5a" stroke-width="1.5"/><circle cx="15" cy="6.5" r="5.3" fill="#fff"/><circle cx="15" cy="6.5" r="5" fill="none" stroke="#4d6d78" stroke-width=".9" opacity=".6"/><circle cx="15" cy="6.5" r="3.7" fill="#f0453c"/></svg>
<div class="ts" style="left:514px"></div>
<svg style="left:528px;top:96px" width="22" height="22" viewBox="0 0 22 22"><circle cx="11" cy="10.5" r="9.4" fill="none" stroke="#5a5a5a" stroke-width="1.8"/><path d="M7.6 5.8L16 10.7L7.6 15.4Z" fill="#22b24a" stroke="#22b24a" stroke-width="1" stroke-linejoin="round"/></svg>
<svg style="left:569px;top:96px" width="24" height="23" viewBox="0 0 24 23"><path d="M12.5 19.8A9.4 9.4 0 1 1 20.5 10.8" fill="none" stroke="#5a5a5a" stroke-width="1.8"/><path d="M8 5.8L16.4 10.7L8 15.4Z" fill="#22b24a" stroke="#22b24a" stroke-width="1" stroke-linejoin="round"/><g stroke="#4a4a4a" stroke-width="1.5" fill="#fff"><ellipse cx="16.3" cy="17" rx="2.6" ry="3.3"/></g><path d="M12 14.5L13.8 15.5M12 17.3H13.6M12 20.2L13.8 19M20.6 14.5L18.8 15.5M20.6 17.3H19M20.6 20.2L18.8 19M14.5 13.2L15.2 14M18.1 13.2L17.4 14" stroke="#4a4a4a" stroke-width="1.3"/></svg>
<div class="ts" style="left:603px"></div>
<svg style="left:618px;top:96px" width="19" height="22" viewBox="0 0 19 22"><g fill="none" stroke="#5a5a5a" stroke-width="1.9"><rect x="1" y="1" width="16.8" height="19.8" rx="2"/><path d="M5 7.2H13.6M5 13.6H13.6"/></g></svg>
<div class="ts" style="left:652px"></div>
<svg style="left:664px;top:95px" width="23" height="23" viewBox="0 0 23 23"><g fill="none" stroke="#5a5a5a" stroke-width="1.8" stroke-linecap="round" stroke-linejoin="round"><path d="M2.5 6H13Q20.8 6 20.8 13.2Q20.8 20.5 13 20.5"/><path d="M7 1.5L2.5 6L7 10.5"/></g></svg>
<svg style="left:706px;top:95px" width="23" height="23" viewBox="0 0 23 23"><g fill="none" stroke="#ababab" stroke-width="1.8" stroke-linecap="round" stroke-linejoin="round"><path d="M20.5 6H10Q2.2 6 2.2 13.2Q2.2 20.5 10 20.5"/><path d="M16 1.5L20.5 6L16 10.5"/></g></svg>
<div class="ts" style="left:741px"></div>
<svg style="left:753px;top:95px" width="23" height="24" viewBox="0 0 23 24"><g fill="none" stroke="#5a5a5a" stroke-width="1.7"><path d="M7.5 1L11.5 4.8L15.5 1"/><path d="M7.5 22.5L11.5 18.7L15.5 22.5"/><path d="M5 8.3H2.2V14H5M18 8.3H20.8V14H18"/><path d="M7.5 8.3H10M13 8.3H15.5M7.5 14H10M13 14H15.5"/></g></svg>
<svg style="left:794px;top:95px" width="24" height="24" viewBox="0 0 24 24"><g fill="none" stroke="#5a5a5a" stroke-width="1.7"><path d="M1.5 2.8H21.5M1.5 10.7H21.5M1.5 18.5H10"/><path d="M14 15.6L17.3 19L20.6 15.6"/></g></svg>
<svg style="left:835px;top:95px" width="24" height="24" viewBox="0 0 24 24"><g fill="none" stroke="#5a5a5a" stroke-width="1.7"><path d="M1.5 2.8H21.5M1.5 10.7H21.5M1.5 18.5H10"/><path d="M14 20.5L17.3 17.1L20.6 20.5"/></g></svg>
<div class="ts" style="left:1444px"></div>
<svg style="left:1455px;top:96px" width="24" height="22" viewBox="0 0 24 22"><g fill="none" stroke="#5a5a5a" stroke-width="1.8" stroke-linejoin="round"><circle cx="5.3" cy="16" r="4"/><circle cx="17.7" cy="16" r="4"/><path d="M1.3 16L4.5 3Q5 1.2 7 1.2H9.5V14M21.7 16L18.5 3Q18 1.2 16 1.2H13.5V14"/><path d="M9.5 7H13.5"/></g></svg>
<div class="ts" style="left:1490px"></div>
<svg style="left:1502px;top:95px" width="24" height="24" viewBox="0 0 24 24"><g fill="none" stroke="#5a5a5a" stroke-width="1.8" stroke-linecap="round" stroke-linejoin="round"><path d="M11 5.9C16.5 5.9 21.8 8.5 21.8 13.2C21.8 14.5 21.2 16 20.6 17"/><path d="M14.5 2.4L11 5.9L14.5 9.4"/><path d="M4.2 9.4C3.5 10.5 3 12 3 13.2C3 17.5 8 20.2 12.9 20.2"/><path d="M9.8 16.7L12.9 20.2L9.8 23.6"/></g></svg>
<div class="ts" style="left:1537px"></div>
<svg style="left:1549px;top:96px" width="23" height="22" viewBox="0 0 23 22"><g fill="none" stroke="#5a5a5a" stroke-width="1.9" stroke-linejoin="round"><path d="M1.5 3Q1.5 1.3 3.2 1.3H15.5L20.5 6.3V19Q20.5 20.7 18.8 20.7H3.2Q1.5 20.7 1.5 19Z"/><path d="M6 1.3V7H14V1.3"/><path d="M5.5 20.7V13H16.5V20.7"/></g></svg>
<svg style="left:1584px;top:103px" width="11" height="7" viewBox="0 0 11 7"><path d="M1 .8H10L5.5 6.3Z" fill="#555"/></svg>
<svg style="left:74px;top:809px" width="15" height="17" viewBox="0 0 15 17"><g fill="none" stroke="#5a5a5a" stroke-width="1.5"><ellipse cx="7.5" cy="3.5" rx="6.3" ry="2.5"/><path d="M1.2 3.5V13.5Q1.2 16 7.5 16Q13.8 16 13.8 13.5V3.5M1.2 8.5Q1.2 11 7.5 11Q13.8 11 13.8 8.5"/></g></svg>
<svg style="left:109px;top:809px" width="17" height="17" viewBox="0 0 17 17"><circle cx="8.5" cy="8.5" r="7.2" fill="none" stroke="#5a5a5a" stroke-width="1.5"/><path d="M8.5 4.5V10.3" stroke="#e34b4b" stroke-width="1.6"/><circle cx="8.5" cy="12.5" r=".9" fill="#e34b4b"/></svg>
<div class="a" style="left:317px;top:123px;width:315px;height:87px;background:#fff;border-radius:6px;box-shadow:0 1px 5px rgba(0,0,0,.2);border:1px solid #eee"></div>
<div class="a" style="left:320px;top:154px;width:310px;height:26px;background:#d5d5d5"></div>
<div class="t mi" style="left:327.5px;top:131px;color:#b3b3b3">Add IF Condition</div>
<div class="t mi" style="left:499px;top:131px;color:#b3b3b3;letter-spacing:0.2px">(Ctrl + Shift + I)</div>
<div class="t mi" style="left:327.5px;top:159px">Add Else IF Condition</div>
<div class="t mi" style="left:494px;top:159px;letter-spacing:0.2px">(Ctrl + Shift + L)</div>
<div class="t mi" style="left:327.5px;top:187px">Add Else Condition</div>
<div class="t mi" style="left:494px;top:187px;letter-spacing:0.15px">(Ctrl + Shift + E)</div>
<svg style="left:355px;top:171px" width="18" height="24" viewBox="0 0 18 24"><path d="M4 12V3.2Q4 1.6 5.5 1.6Q7 1.6 7 3.2V10.5V8.5Q7 7 8.5 7Q10 7 10 8.5V10.5Q10 9 11.5 9Q13 9 13 10.5V11.5Q13 10.3 14.3 10.3Q15.6 10.3 15.6 11.8V16Q15.6 19 13.5 21.5H7.5Q5.5 19.5 3.5 17L1.6 14.4Q1 13.3 2 12.8Q3 12.3 4 13.3Z" fill="#fff" stroke="#222" stroke-width="1.1" stroke-linejoin="round"/></svg>
<div class="a" style="left:65px;top:690px;width:1580px;height:139px;background:linear-gradient(to bottom,rgba(0,0,0,0) 0px,rgba(0,0,0,.035) 30px,rgba(0,0,0,.12) 62px,rgba(0,0,0,.2) 108px,rgba(0,0,0,.26) 139px)"></div>
<div class="a" style="left:0;top:690px;width:65px;height:139px;background:linear-gradient(to bottom,rgba(0,0,0,0) 0px,rgba(0,0,0,.03) 40px,rgba(0,0,0,.1) 100px,rgba(0,0,0,.15) 139px)"></div>
</body></html>
